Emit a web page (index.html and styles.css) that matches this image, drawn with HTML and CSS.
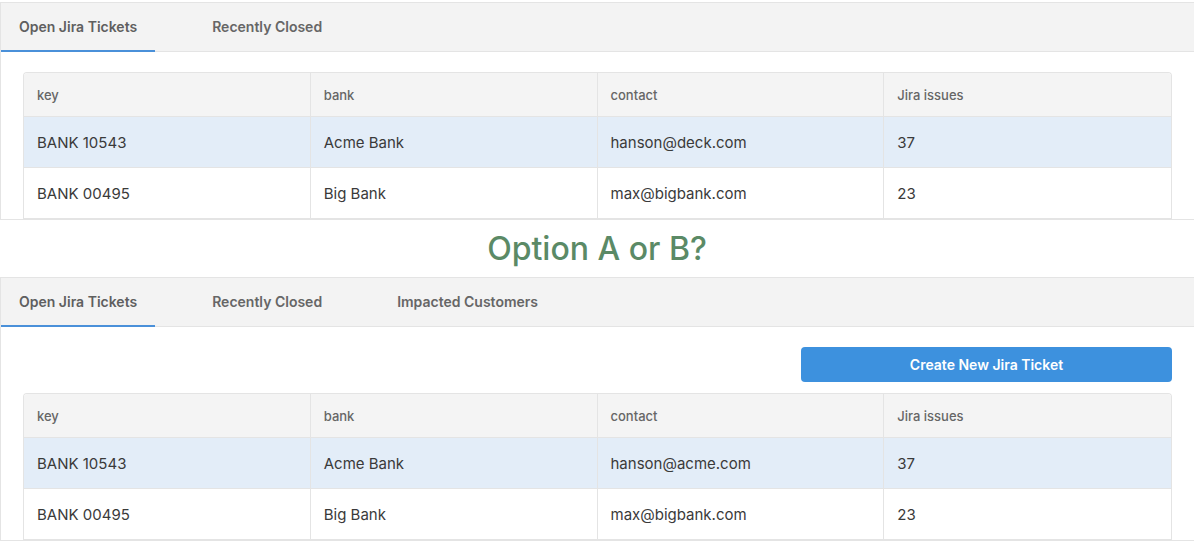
FILE: index.html
```html
<!DOCTYPE html>
<html lang="en">
<head>
  <meta charset="UTF-8" />
  <title>Jira Tickets - Option A or B</title>
  <link rel="stylesheet" href="styles.css">
</head>
<body>

  <!-- Option A -->
  <div class="panel panel-a">
    <div class="tabs">
      <div class="tab active">Open Jira Tickets</div>
      <div class="tab">Recently Closed</div>
    </div>
    <div class="panel-body">
      <table class="grid">
        <thead>
          <tr><th>key</th><th>bank</th><th>contact</th><th>Jira issues</th></tr>
        </thead>
        <tbody>
          <tr class="selected"><td>BANK 10543</td><td>Acme Bank</td><td>hanson@deck.com</td><td>37</td></tr>
          <tr><td>BANK 00495</td><td>Big Bank</td><td>max@bigbank.com</td><td>23</td></tr>
        </tbody>
      </table>
    </div>
  </div>

  <h2 class="question">Option A or B?</h2>

  <!-- Option B -->
  <div class="panel">
    <div class="tabs">
      <div class="tab active">Open Jira Tickets</div>
      <div class="tab">Recently Closed</div>
      <div class="tab">Impacted Customers</div>
    </div>
    <div class="panel-body">
      <div class="actions">
        <button class="create-btn">Create New Jira Ticket</button>
      </div>
      <table class="grid">
        <thead>
          <tr><th>key</th><th>bank</th><th>contact</th><th>Jira issues</th></tr>
        </thead>
        <tbody>
          <tr class="selected"><td>BANK 10543</td><td>Acme Bank</td><td>hanson@acme.com</td><td>37</td></tr>
          <tr><td>BANK 00495</td><td>Big Bank</td><td>max@bigbank.com</td><td>23</td></tr>
        </tbody>
      </table>
    </div>
  </div>

</body>
</html>
```

FILE: styles.css
```css
:root {
  --blue: #3d91de;
  --line: #e4e4e4;
  --tab-bg: #f3f3f3;
  --text: #3a3a3a;
  --muted: #666;
}

* {
  box-sizing: border-box;
}

body {
  margin: 0;
  padding-top: 2px;
  width: 1194px;
  font-family: Inter, "Noto Sans", sans-serif;
  color: var(--text);
  background: #fff;
}

.panel {
  width: 1194px;
  border: 1px solid var(--line);
  border-right: none;
  background: #fff;
}

.tabs {
  display: flex;
  gap: 39px;
  height: 49px;
  background: var(--tab-bg);
  border-bottom: 1px solid var(--line);
}

.tab {
  padding: 0 18px;
  display: flex;
  align-items: center;
  font-size: 14px;
  font-weight: 600;
  color: #666;
  border-bottom: 2px solid transparent;
  margin-bottom: -1px;
}

.tab.active {
  color: #5f5f5f;
  border-bottom-color: #4a90d9;
}

.panel-body {
  padding: 20px 22px 0 22px;
}

.actions {
  display: flex;
  justify-content: flex-end;
  margin-bottom: 11px;
}

.create-btn {
  width: 371px;
  height: 35px;
  border: none;
  border-radius: 4px;
  background: var(--blue);
  color: #fff;
  font-family: inherit;
  font-size: 14px;
  font-weight: 600;
  cursor: pointer;
}

.grid {
  width: 1149px;
  border-collapse: separate;
  border-spacing: 0;
  border: 1px solid var(--line);
  border-bottom: none;
  border-radius: 4px 4px 0 0;
  overflow: hidden;
  table-layout: fixed;
}

.grid th,
.grid td {
  text-align: left;
  padding: 0 13px;
  border-right: 1px solid var(--line);
}

.grid th:last-child,
.grid td:last-child {
  border-right: none;
}

.grid th {
  height: 44px;
  background: #f4f4f4;
  font-size: 13px;
  font-weight: 500;
  color: var(--muted);
  border-bottom: 1px solid var(--line);
}

.grid td {
  height: 51px;
  font-size: 15px;
  color: var(--text);
  border-bottom: 1px solid var(--line);
}

.grid tr.selected td {
  background: #e3edf8;
}

.question {
  margin: 0;
  height: 57px;
  display: flex;
  align-items: center;
  justify-content: center;
  font-size: 32px;
  font-weight: 500;
  color: #5b8a66;
}
```
